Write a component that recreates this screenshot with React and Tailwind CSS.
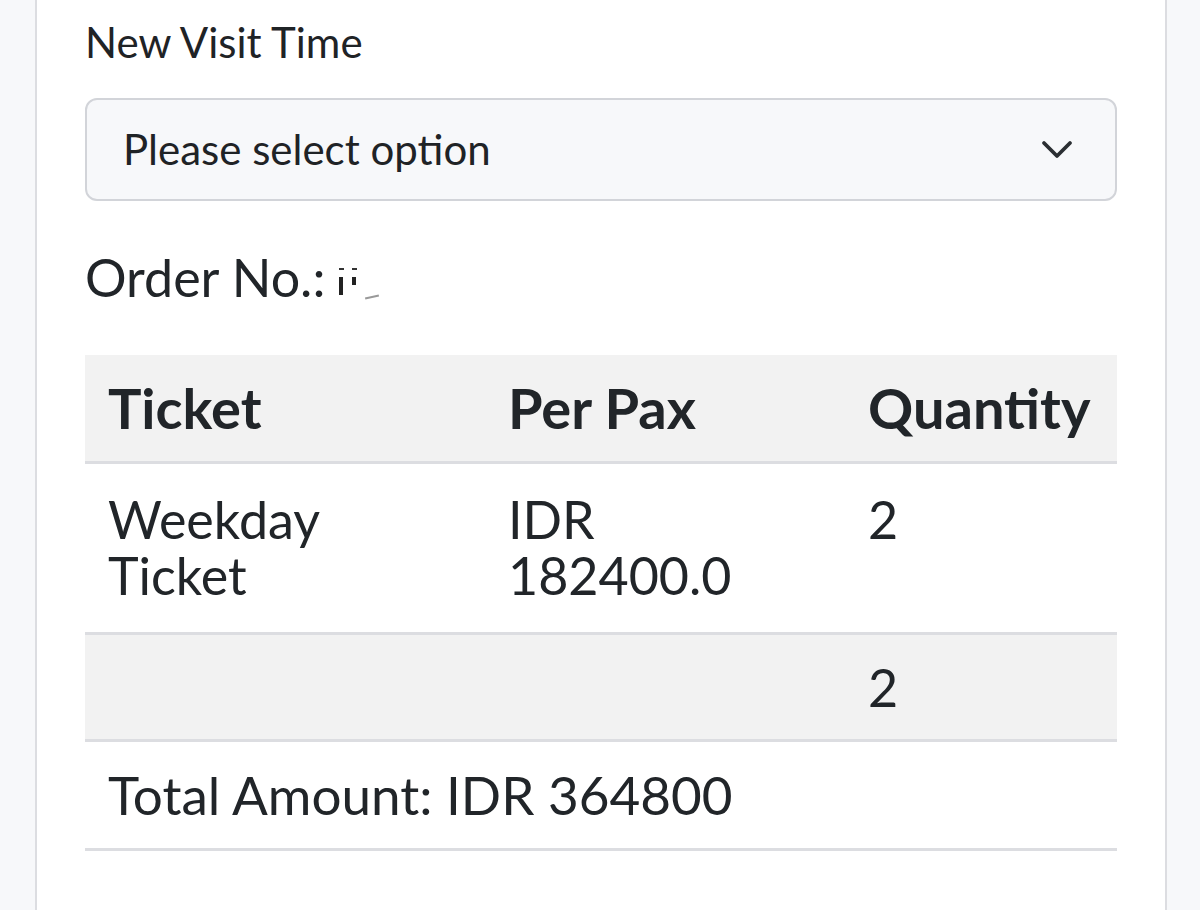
import React from 'react';

const rows = [
    { ticket: ['Weekday', 'Ticket'], price: ['IDR', '182400.0'], qty: '2' },
];

const Chevron = () => (
    <svg width="32" height="20" viewBox="0 0 32 20" fill="none">
        <path d="M3 3l13 13L29 3" stroke="#2b2f33" strokeWidth="3.8" strokeLinecap="round" strokeLinejoin="round" />
    </svg>
);

const App = () => {
    return (
        <div className="flex h-[910px] w-full overflow-hidden bg-[#f7f8fa] text-[#212529] font-['Lato','Noto_Sans',sans-serif]">
            <div className="w-[35px] shrink-0" />

            {/* Карточка заказа */}
            <div className="flex-1 bg-white border-x-2 border-[#dcdde1] px-[48px] pt-[16px]">
                <label className="block text-[42px] leading-[52px] text-[#1f2326]">New Visit Time</label>

                <div className="mt-[30px] flex h-[103px] items-center justify-between rounded-[12px] border-2 border-[#d2d4d9] bg-[#f7f8fa] pl-[36px] pr-[42px]">
                    <span className="text-[42px] text-[#1f2326]">Please select option</span>
                    <Chevron />
                </div>

                <div className="mt-[48px] flex items-end text-[52px] leading-[56px]">
                    <span>Order No.:&nbsp;</span>
                    <span className="mb-[10px] flex items-end gap-[8px]">
                        <span className="flex flex-col items-center gap-[7px]">
                            <span className="h-[2px] w-[5px] bg-[#333]" />
                            <span className="h-[18px] w-[4px] bg-[#222]" />
                        </span>
                        <span className="mb-[10px] flex flex-col items-center gap-[7px]">
                            <span className="h-[2px] w-[5px] bg-[#333]" />
                            <span className="h-[8px] w-[4px] bg-[#222]" />
                        </span>
                        <span className="mb-[-3px] h-[2px] w-[14px] -rotate-12 bg-[#999]" />
                    </span>
                </div>

                <table className="mt-[50px] w-full border-collapse text-left text-[52px] leading-[56px]">
                    <thead>
                        <tr className="bg-[#f2f2f2] border-b-[3px] border-[#dcdde1]">
                            <th className="w-[400px] px-[23px] py-[23px] text-[56px] leading-[60px] font-bold">Ticket</th>
                            <th className="w-[360px] px-[23px] py-[23px] text-[56px] leading-[60px] font-bold">Per Pax</th>
                            <th className="px-[23px] py-[23px] text-[56px] leading-[60px] font-bold">Quantity</th>
                        </tr>
                    </thead>
                    <tbody>
                        {rows.map((row) => (
                            <tr key={row.ticket.join(' ')} className="border-b-[3px] border-[#dcdde1] align-top">
                                <td className="px-[23px] pt-[27px] pb-[29px]">{row.ticket[0]}<br />{row.ticket[1]}</td>
                                <td className="px-[23px] pt-[27px] pb-[29px]">{row.price[0]}<br />{row.price[1]}</td>
                                <td className="px-[23px] pt-[27px] pb-[29px]">{row.qty}</td>
                            </tr>
                        ))}
                        <tr className="bg-[#f2f2f2] border-b-[3px] border-[#dcdde1]">
                            <td className="px-[23px] py-[24px]"></td>
                            <td className="px-[23px] py-[24px]"></td>
                            <td className="px-[23px] py-[24px]">2</td>
                        </tr>
                        <tr className="border-b-[3px] border-[#dcdde1]">
                            <td colSpan={3} className="px-[23px] py-[25px] text-[53px]">Total Amount: IDR 364800</td>
                        </tr>
                    </tbody>
                </table>
            </div>

            <div className="w-[33px] shrink-0" />
        </div>
    );
};

export default App;
